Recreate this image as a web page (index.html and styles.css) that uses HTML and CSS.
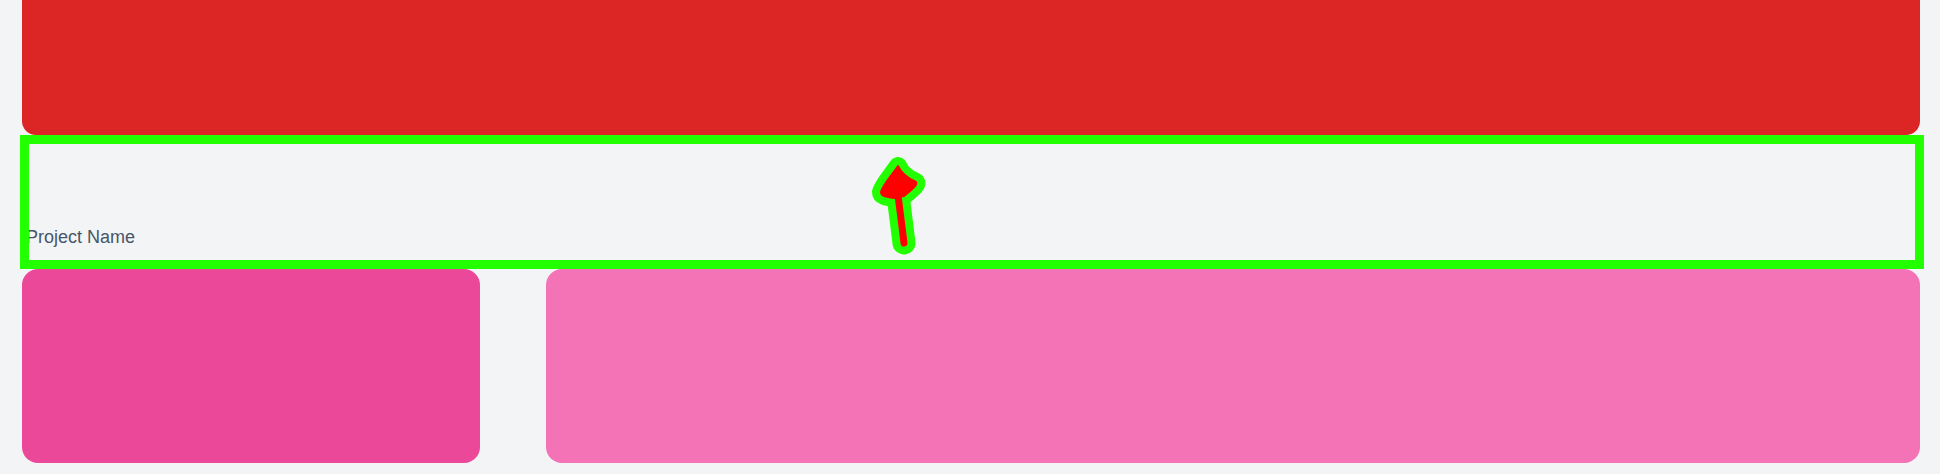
FILE: index.html
```html
<!DOCTYPE html>
<html>
<head>
<meta charset="utf-8">
<link rel="stylesheet" href="styles.css">
</head>
<body>
<div class="page">
  <div class="hero"></div>
  <div class="title-row"><span class="title">Project Name</span></div>
  <div class="cards">
    <div class="card card-a"></div>
    <div class="card card-b"></div>
  </div>
</div>
<div class="highlight"></div>
<svg class="arrow" width="80" height="120" viewBox="0 0 80 120">
  <g stroke="#22ff00" fill="#22ff00" stroke-linejoin="round" stroke-linecap="round">
    <path d="M38,26 C41,33 47,38 56,42 C58,45 52,49 44,56 L34,58 C26,57 21,56 21,52 C22,46 32,35 38,26 Z" stroke-width="18"/>
    <path d="M38,55 L44,103" stroke-width="23" fill="none"/>
  </g>
  <g stroke="#ff0000" fill="#ff0000" stroke-linejoin="round" stroke-linecap="round">
    <path d="M38,26 C41,33 47,38 56,42 C58,45 52,49 44,56 L34,58 C26,57 21,56 21,52 C22,46 32,35 38,26 Z" stroke-width="2"/>
    <path d="M38,55 L44,103" stroke-width="7" fill="none"/>
  </g>
</svg>
</body>
</html>
```
FILE: styles.css
```css
html, body {
  margin: 0;
  padding: 0;
  background: #f3f4f6;
  font-family: "Liberation Sans", Arial, sans-serif;
}
.page {
  padding: 0 20px 0 22px;
  display: flex;
  flex-direction: column;
}
.hero {
  height: 135px;
  background: #dc2626;
  border-radius: 0 0 14px 14px;
}
.title-row {
  height: 134px;
  box-sizing: border-box;
  display: flex;
  align-items: flex-end;
  padding: 0 0 20px 4px;
}
.title {
  font-size: 18px;
  line-height: 24px;
  color: #475569;
}
.cards {
  display: grid;
  grid-template-columns: 1fr 3fr;
  column-gap: 66px;
}
.card {
  height: 194px;
  border-radius: 16px;
}
.card-a { background: #ec4899; }
.card-b { background: #f472b6; }
.highlight {
  position: absolute;
  left: 20px;
  top: 135px;
  width: 1904px;
  height: 134px;
  box-sizing: border-box;
  border: 9px solid #22ff00;
}
.arrow {
  position: absolute;
  left: 860px;
  top: 140px;
}
```
